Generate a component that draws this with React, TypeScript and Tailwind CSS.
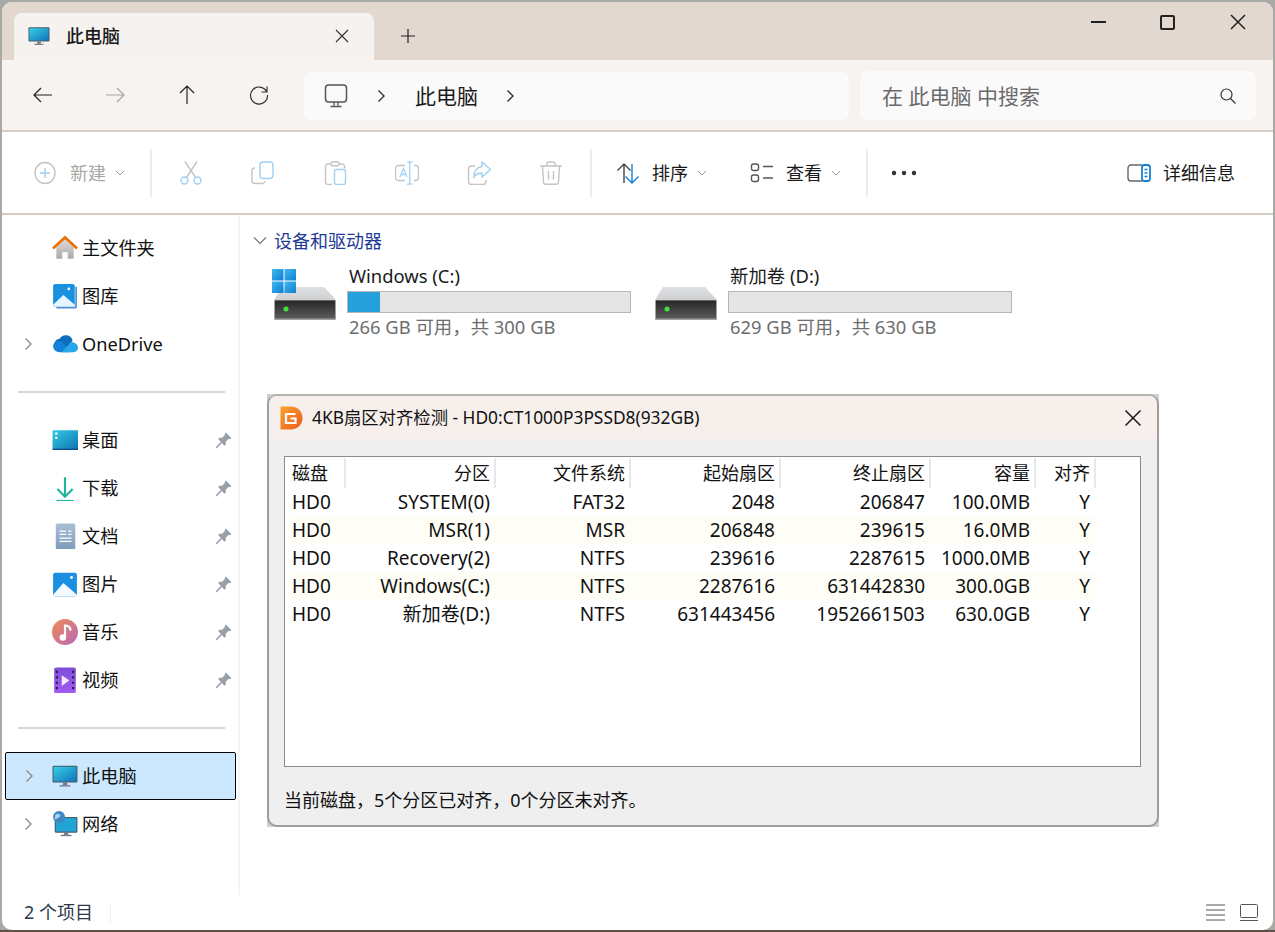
import type { ReactNode } from "react";

const BLUE = "#9fd0f5";
const GRAY = "#c4c4c4";

function Svg({ size = 24, children }: { size?: number; children: ReactNode }) {
  return (
    <svg width={size} height={size} viewBox="0 0 24 24" fill="none" className="shrink-0">
      {children}
    </svg>
  );
}

function Chevron({ color = "#555", size = 14 }: { color?: string; size?: number }) {
  return (
    <svg width={size} height={size} viewBox="0 0 14 14" fill="none" className="shrink-0">
      <path d="M4.5 1.5L10 7l-5.500 5.500" stroke={color} strokeWidth="1.4" />
    </svg>
  );
}

function Caret() {
  return (
    <svg width="10" height="10" viewBox="0 0 10 10" fill="none" className="shrink-0">
      <path d="M1 3l4 4 4-4" stroke="#9a9a9a" strokeWidth="1" />
    </svg>
  );
}

function Monitor({ size = 24 }: { size?: number }) {
  return (
    <svg width={size} height={size} viewBox="0 0 24 24" className="shrink-0">
      <defs>
        <linearGradient id="mon" x1="0" y1="0" x2="1" y2="1">
          <stop offset="0" stopColor="#35d0e6" />
          <stop offset="1" stopColor="#1272b8" />
        </linearGradient>
      </defs>
      <rect x="0.500" y="2.500" width="23" height="15.500" rx="1" fill="#4b5a66" />
      <rect x="1.500" y="3.500" width="21" height="13.500" fill="url(#mon)" />
      <rect x="10" y="18" width="4" height="2.500" fill="#6e7780" />
      <rect x="7" y="20.500" width="10" height="1.200" fill="#6e7780" />
    </svg>
  );
}

function Pin() {
  return (
    <svg width="17" height="17" viewBox="0 0 16 16" className="shrink-0">
      <path d="M10.200 0.500l5.300 5.300-1.700 1-1-0.400-2.700 2.700 0.200 2.600-1.300 1.200-2.600-2.600L1.500 15.500l-1-1 5-5.300-2.600-2.600 1.200-1.300 2.600 0.200 2.700-2.700-0.400-1z" fill="#97a0a8" />
    </svg>
  );
}

function Home() {
  return (
    <Svg size={26}>
      <defs>
        <linearGradient id="hb" x1="0" y1="0" x2="0" y2="1">
          <stop offset="0" stopColor="#dcdcdc" />
          <stop offset="1" stopColor="#a9a9a9" />
        </linearGradient>
      </defs>
      <path d="M4 11l8-7 8 7v11h-5.500v-6h-5v6H4z" fill="url(#hb)" />
      <path d="M0.800 12.500L12 2.300l11.200 10.200" stroke="#e8720c" strokeWidth="2.600" />
    </Svg>
  );
}

function Gallery() {
  return (
    <Svg size={26}>
      <path d="M21.500 3.500H23V22a1.500 1.500 0 0 1-1.500 1.500H4V22h17.500z" fill="#4a8fd0" />
      <rect x="1" y="1" width="20" height="21" rx="2" fill="#1a90e0" />
      <path d="M1 20l9.500-9L21 20v0.500a1.500 1.500 0 0 1-1.500 1.500h-17A1.500 1.500 0 0 1 1 20.500z" fill="#e6f4ff" />
      <circle cx="15.500" cy="5.500" r="1.300" fill="#fff" />
    </Svg>
  );
}

function Cloud() {
  return (
    <Svg size={26}>
      <path d="M6 17a5 5 0 0 1 1-9.800A6.500 6.500 0 0 1 19 9l-6 8z" fill="#0f6cbd" />
      <path d="M7 19.500a5.800 5.800 0 0 1-6-5.500 5 5 0 0 1 5-4.500c2.500 0 4 1.500 5 2.500l6 7.500z" fill="#1582d8" />
      <path d="M9 19.500l8-9c3.500-0.800 7 1.500 7 5 0 2.400-2 4-4 4z" fill="#28a8ea" />
    </Svg>
  );
}

function Desktop() {
  return (
    <Svg size={26}>
      <defs>
        <linearGradient id="dt" x1="0" y1="0" x2="1" y2="1">
          <stop offset="0" stopColor="#32cfe0" />
          <stop offset="1" stopColor="#0d6cb4" />
        </linearGradient>
      </defs>
      <rect x="0.500" y="3" width="25" height="18" rx="1" fill="url(#dt)" />
      <rect x="0.500" y="20" width="25" height="1.200" fill="#0a4c85" />
      <rect x="3" y="5" width="2" height="2" fill="#fff" />
      <rect x="3" y="9" width="2" height="2" fill="#fff" />
    </Svg>
  );
}

function Download() {
  return (
    <Svg size={26}>
      <path d="M12 2v17M5 13l7 7 7-7" stroke="#22b39b" strokeWidth="2" />
      <path d="M4 24h16" stroke="#19b5a0" strokeWidth="2" />
    </Svg>
  );
}

function Doc() {
  return (
    <Svg size={26}>
      <defs>
        <linearGradient id="dc" x1="0" y1="0" x2="0" y2="1">
          <stop offset="0" stopColor="#a9bfd6" />
          <stop offset="1" stopColor="#7f9cba" />
        </linearGradient>
      </defs>
      <rect x="3.500" y="0.500" width="18" height="24" rx="1.500" fill="url(#dc)" />
      <path d="M7 7.500h6M7 10.500h6M15 7.500h3M15 10.500h3M7 14h11M7 17h11" stroke="#fff" strokeWidth="1.300" />
    </Svg>
  );
}

function Picture() {
  return (
    <Svg size={26}>
      <rect x="1" y="1.500" width="22" height="22" rx="2" fill="#1a8ee0" />
      <path d="M1 22l9.500-11L23 22v0a1.500 1.500 0 0 1-1.500 1.500h-19A1.500 1.500 0 0 1 1 22z" fill="#f2f9ff" />
      <circle cx="18" cy="6" r="1.300" fill="#fff" />
    </Svg>
  );
}

function Music() {
  return (
    <Svg size={26}>
      <defs>
        <linearGradient id="mu" x1="0" y1="0" x2="1" y2="1">
          <stop offset="0" stopColor="#f08c55" />
          <stop offset="1" stopColor="#b668b8" />
        </linearGradient>
      </defs>
      <circle cx="12" cy="12" r="12" fill="url(#mu)" />
      <circle cx="10" cy="17" r="3" fill="#fff" />
      <path d="M12 17V6c2 0 5 1 5 4.500" stroke="#fff" strokeWidth="2" fill="none" />
    </Svg>
  );
}

function Video() {
  return (
    <Svg size={26}>
      <defs>
        <linearGradient id="vi" x1="0" y1="0" x2="0" y2="1">
          <stop offset="0" stopColor="#7e4dd8" />
          <stop offset="1" stopColor="#a35cf0" />
        </linearGradient>
      </defs>
      <rect x="2" y="0.500" width="20" height="24" rx="1.500" fill="url(#vi)" />
      <path d="M3.500 3.500h2v2h-2zM3.500 8.500h2v2h-2zM3.500 13.500h2v2h-2zM3.500 18.500h2v2h-2zM18.500 3.500h2v2h-2zM18.500 8.500h2v2h-2zM18.500 13.500h2v2h-2zM18.500 18.500h2v2h-2z" fill="#2f1a5e" />
      <path d="M9 7.500l7 5-7 5z" fill="#f3eaff" />
    </Svg>
  );
}

function Network() {
  return (
    <Svg size={26}>
      <rect x="2.500" y="5.500" width="21" height="14.500" rx="1" fill="#49596a" />
      <rect x="3.500" y="6.500" width="19" height="12.500" fill="#22a5d5" />
      <rect x="11" y="20" width="4" height="2" fill="#6e7780" />
      <rect x="8" y="22" width="10" height="1.200" fill="#6e7780" />
      <circle cx="6.500" cy="5.500" r="5.500" fill="#3f86c4" />
      <path d="M3 3.500c2-1.500 3.500-1 4.500 0s-1 2.500-2 3-2 1.500-3 1z" fill="#a8d2ee" />
    </Svg>
  );
}

function DriveIcon({ logo }: { logo?: boolean }) {
  const id = logo ? "a" : "b";
  return (
    <svg width="66" height="54" viewBox="0 0 66 54" className="shrink-0">
      <defs>
        <linearGradient id={`top${id}`} x1="0" y1="0" x2="0" y2="1">
          <stop offset="0" stopColor="#dfe0e2" />
          <stop offset="1" stopColor="#cfd0d3" />
        </linearGradient>
        <linearGradient id={`box${id}`} x1="0" y1="0" x2="0" y2="1">
          <stop offset="0" stopColor="#262626" />
          <stop offset="1" stopColor="#5c5c5c" />
        </linearGradient>
        <linearGradient id={`win${id}`} x1="0" y1="0" x2="1" y2="1">
          <stop offset="0" stopColor="#3fb8ee" />
          <stop offset="1" stopColor="#0f7fd4" />
        </linearGradient>
      </defs>
      <path d="M11 21h42l12 13H3z" fill={`url(#top${id})`} />
      <rect x="3" y="34" width="62" height="20" rx="1" fill="#a0a0a0" />
      <rect x="4" y="34.500" width="60" height="18" fill={`url(#box${id})`} />
      <circle cx="15" cy="43" r="2.500" fill="#3ee23a" />
      {logo && (
        <g fill={`url(#win${id})`}>
          <rect x="1" y="3" width="11.500" height="11.500" />
          <rect x="13.500" y="3" width="11.500" height="11.500" />
          <rect x="1" y="15.500" width="11.500" height="11.500" />
          <rect x="13.500" y="15.500" width="11.500" height="11.500" />
        </g>
      )}
    </svg>
  );
}

function Drive({ name, free, pct, logo }: { name: string; free: string; pct: number; logo?: boolean }) {
  return (
    <div className="flex">
      <div className="w-[76px] pt-[2px]">
        <DriveIcon logo={logo} />
      </div>
      <div className="w-[284px]">
        <div className="h-[24px] pl-[2px] text-[18.400px] leading-[24px] text-[#1a1a1a]">{name}</div>
        <div className="mt-[3px] h-[22px] border border-[#b6b6b6] bg-[#e5e5e6]">
          <div className="h-full bg-[#26a0da]" style={{ width: `${pct}%` }} />
        </div>
        <div className="mt-[2px] h-[24px] pl-[2px] text-[18.400px] leading-[24px] text-[#6d6d6d]">{free}</div>
      </div>
    </div>
  );
}

function NavRow({ icon, label, expand, pin, selected }: { icon: ReactNode; label: string; expand?: boolean; pin?: boolean; selected?: boolean }) {
  return (
    <div
      className={`ml-[3px] flex h-[48px] w-[231px] items-center rounded-[2px] ${
        selected ? "border border-black bg-[#cce8ff]" : ""
      }`}
    >
      <div className={`flex justify-end ${selected ? "w-[43px] pr-[13px]" : "w-[44px] pr-[14px]"}`}>
        {expand && <Chevron color="#8c8c8c" />}
      </div>
      <div className="flex w-[32px] justify-center">{icon}</div>
      <span className="ml-[1px] pt-[1px] text-[18.200px] text-[#111]">{label}</span>
      {pin && (
        <span className="ml-auto pr-[4px]">
          <Pin />
        </span>
      )}
    </div>
  );
}

function Sep() {
  return (
    <div className="flex h-[48px] items-center pl-[16px]">
      <div className="h-[2px] w-[207px] bg-[#d6d6d6]" />
    </div>
  );
}

const tools = [
  <>
    <circle cx="5.500" cy="19.500" r="3.500" stroke={BLUE} strokeWidth="1.400" />
    <circle cx="18.500" cy="19.500" r="3.500" stroke={BLUE} strokeWidth="1.400" />
    <path d="M7.500 16.500L18 0.500M16.500 16.500L6 0.500" stroke={GRAY} strokeWidth="1.400" />
  </>,
  <>
    <path d="M4 7h-0.500A2.500 2.500 0 0 0 1 9.500v10A3 3 0 0 0 4 22.500h7a3 3 0 0 0 3-2.500" stroke={GRAY} strokeWidth="1.400" />
    <rect x="9" y="1" width="13" height="16.500" rx="3" stroke={BLUE} strokeWidth="1.400" />
  </>,
  <>
    <path d="M8 3H5a2.500 2.500 0 0 0-2.500 2.500v15.500a2.500 2.500 0 0 0 2.500 2.500h4M16 3h3a2.500 2.500 0 0 1 2.500 2.500v2" stroke={GRAY} strokeWidth="1.400" />
    <rect x="8" y="0.800" width="8" height="4" rx="1.500" stroke={GRAY} strokeWidth="1.400" />
    <rect x="11.500" y="8.500" width="11" height="15" rx="2" stroke={BLUE} strokeWidth="1.400" />
  </>,
  <>
    <path d="M10 4.500H3.500A3 3 0 0 0 0.500 7.500v9A3 3 0 0 0 3.500 19.500H10M19 4.500h1.500a3 3 0 0 1 3 3v9a3 3 0 0 1-3 3H19" stroke={GRAY} strokeWidth="1.400" />
    <path d="M12 0.800h5.500M14.750 0.800v22.400M12 23.200h5.500M5 16L8.500 7.500l3.300 8.500M6 13.500h4.800" stroke={BLUE} strokeWidth="1.300" />
  </>,
  <>
    <path d="M8 5H4.500A3 3 0 0 0 1.500 8v12.500a3 3 0 0 0 3 3H16a3 3 0 0 0 3-3v-1.500" stroke={GRAY} strokeWidth="1.400" />
    <path d="M15 1l8.500 7.500L15 16v-4c-4 0-6 1-8 4 0-5.500 2-9.500 8-10.500z" stroke={BLUE} strokeWidth="1.400" />
  </>,
  <>
    <path d="M1 5h22M8 5V3A2 2 0 0 1 10 1h4A2 2 0 0 1 16 3V5M3.500 5l1 16a2.500 2.500 0 0 0 2.500 2.300h10a2.500 2.500 0 0 0 2.500-2.300L20.500 5M9.500 10v8.500M14.500 10v8.500" stroke={GRAY} strokeWidth="1.400" />
  </>,
];

const rows = [
  ["SYSTEM(0)", "FAT32", "2048", "206847", "100.0MB"],
  ["MSR(1)", "MSR", "206848", "239615", "16.0MB"],
  ["Recovery(2)", "NTFS", "239616", "2287615", "1000.0MB"],
  ["Windows(C:)", "NTFS", "2287616", "631442830", "300.0GB"],
  ["新加卷(D:)", "NTFS", "631443456", "1952661503", "630.0GB"],
];

const colWidths = ["w-[150px]", "w-[135px]", "w-[150px]", "w-[150px]", "w-[105px]", "w-[60px]"];

function DiskDialog() {
  return (
    <div className="absolute left-[267px] top-[394px] h-[433px] w-[892px] bg-[#cfcfcc]">
      <div className="flex h-full flex-col overflow-hidden rounded-[10px] border-x-[2px] border-b-[2px] border-t-[2px] border-x-[#9d9d9d] border-b-[#9d9d9d] border-t-[#b5b3ac] bg-[#efefef]">
        <div className="flex h-[43px] shrink-0 items-center bg-[#f6efeb] pl-[11px]">
          <svg width="23" height="24" viewBox="0 0 23 24" className="shrink-0">
            <defs>
              <linearGradient id="dg" x1="0" y1="0" x2="1" y2="1">
                <stop offset="0" stopColor="#f9a12c" />
                <stop offset="1" stopColor="#ee5a1c" />
              </linearGradient>
            </defs>
            <path d="M0.500 0.500H11c6.500 0 11.500 5 11.500 11.500S17.500 23.500 11 23.500H0.500z" fill="url(#dg)" />
            <path d="M15.500 8H6v9h9.500v-4.500H10.500" stroke="#fff" strokeWidth="2.200" fill="none" />
          </svg>
          <span className="ml-[9px] text-[17.350px] text-[#111]">4KB扇区对齐检测 - HD0:CT1000P3PSSD8(932GB)</span>
          <svg width="18" height="18" viewBox="0 0 18 18" className="ml-auto mr-[15px]">
            <path d="M1.500 1.500l15 15M16.500 1.500l-15 15" stroke="#1a1a1a" strokeWidth="1.500" />
          </svg>
        </div>
        <div className="ml-[15px] mt-[17px] h-[311px] w-[857px] shrink-0 border border-[#878b96] bg-white pt-[1px] text-[18px] text-[#111]">
          <div className="ml-[5px] flex h-[30px] items-center">
            <div className="flex h-full w-[56px] items-center border-r-2 border-[#e8e8e8] pl-[2px]">磁盘</div>
            {["分区", "文件系统", "起始扇区", "终止扇区", "容量", "对齐"].map((h, i) => (
              <div key={h} className={`flex h-full items-center justify-end border-r-2 border-[#e8e8e8] pr-[4px] ${colWidths[i]}`}>
                {h}
              </div>
            ))}
          </div>
          {rows.map((r, n) => (
            <div key={r[0]} className={`ml-[5px] flex h-[28px] w-[805px] items-center text-[19px] ${n % 2 === 1 ? "bg-[#fefef7]" : ""}`}>
              <div className="w-[55px] pl-[2px]">HD0</div>
              {[...r, "Y"].map((c, i) => (
                <div key={i} className={`pr-[5px] text-right ${colWidths[i]}`}>
                  {c}
                </div>
              ))}
            </div>
          ))}
        </div>
        <div className="ml-[15px] mt-[21px] h-[24px] text-[18px] leading-[24px] text-[#111]">当前磁盘，5个分区已对齐，0个分区未对齐。</div>
      </div>
    </div>
  );
}

export default function App() {
  return (
    <div className="relative h-[932px] w-[1275px] overflow-hidden bg-[linear-gradient(to_bottom,#a9a9a6_930px,#5f5147_930px)] px-[2px] pb-[2px] pt-[2px] font-['Noto_Sans','Noto_Sans_CJK_SC',sans-serif]">
      <div className="flex h-full flex-col overflow-hidden rounded-[10px] bg-white">
        {/* title bar */}
        <div className="flex h-[58px] shrink-0 bg-[#e3d8d0]">
          <div className="ml-[12px] mt-[11px] flex h-[47px] w-[360px] items-center rounded-t-[8px] bg-[#f6f2ef] pb-[2px] pl-[14px]">
            <Monitor size={22} />
            <span className="ml-[16px] pt-[2px] text-[18px] font-medium text-[#1a1a1a]">此电脑</span>
            <svg width="14" height="14" viewBox="0 0 14 14" className="ml-auto mr-[25px]">
              <path d="M1 1l12 12M13 1L1 13" stroke="#333" strokeWidth="1.100" />
            </svg>
          </div>
          <svg width="14" height="14" viewBox="0 0 14 14" className="ml-[27px] mt-[27px]">
            <path d="M7 0v14M0 7h14" stroke="#222" strokeWidth="1.200" />
          </svg>
          <div className="ml-auto flex h-[40px]">
            <div className="flex w-[70px] items-center justify-center">
              <div className="h-[2px] w-[15px] bg-[#222]" />
            </div>
            <div className="flex w-[70px] items-center justify-center">
              <div className="mr-[2px] h-[15px] w-[15px] rounded-[2px] border-2 border-[#222]" />
            </div>
            <div className="flex w-[70px] items-center justify-center">
              <svg width="16" height="16" viewBox="0 0 16 16">
                <path d="M1 1l14 14M15 1L1 15" stroke="#222" strokeWidth="1.500" />
              </svg>
            </div>
          </div>
        </div>

        {/* nav bar */}
        <div className="flex h-[72px] shrink-0 items-start border-b-2 border-[#d6cbc5] bg-[#f7f3f1] pl-[5px]">
          <div className="flex h-[70px] items-center">
            <div className="flex w-[72px] justify-center">
              <Svg>
                <path d="M21 12H3M10 5l-7 7 7 7" stroke="#222" strokeWidth="1.200" />
              </Svg>
            </div>
            <div className="flex w-[72px] justify-center">
              <Svg>
                <path d="M3 12h18M14 5l7 7-7 7" stroke="#a6a6a6" strokeWidth="1.200" />
              </Svg>
            </div>
            <div className="flex w-[72px] justify-center">
              <Svg>
                <path d="M12 21V3M5 10l7-7 7 7" stroke="#222" strokeWidth="1.200" />
              </Svg>
            </div>
            <div className="flex w-[72px] justify-center">
              <Svg>
                <path d="M19.500 8.500A8.500 8.500 0 1 0 20.500 12M20 3.500v5.500h-5.500" stroke="#333" strokeWidth="1.200" />
              </Svg>
            </div>
          </div>
          <div className="ml-[9px] mt-[12px] flex h-[48px] w-[545px] items-center rounded-[7px] bg-[#fbfafa] pl-[20px]">
            <svg width="24" height="24" viewBox="0 0 24 24" fill="none">
              <rect x="1.500" y="1" width="21" height="17" rx="3" stroke="#555" strokeWidth="1.500" />
              <path d="M10 18v3.500M14 18v3.500M6.500 22.500h11" stroke="#555" strokeWidth="1.300" />
            </svg>
            <span className="ml-[26px]">
              <Chevron color="#333" />
            </span>
            <span className="ml-[27px] pt-[2px] text-[21px] text-[#1a1a1a]">此电脑</span>
            <span className="ml-[25px]">
              <Chevron color="#333" />
            </span>
          </div>
          <div className="ml-[11px] mt-[11px] flex h-[49px] w-[396px] items-center justify-between rounded-[7px] bg-[#fbfafa] pl-[22px] pr-[19px]">
            <span className="pt-[2px] text-[21px] text-[#6b6b6b]">在 此电脑 中搜索</span>
            <svg width="18" height="18" viewBox="0 0 18 18" fill="none">
              <circle cx="7.500" cy="7.500" r="5.500" stroke="#333" strokeWidth="1.200" />
              <path d="M11.500 11.500L16.500 16.500" stroke="#333" strokeWidth="1.200" />
            </svg>
          </div>
        </div>

        {/* command bar */}
        <div className="flex h-[83px] shrink-0 items-center border-b-2 border-[#d6cbc5] bg-white pl-[32px] pr-[38px] pt-[1px]">
          <svg width="22" height="24" viewBox="0 0 22 24" fill="none" className="shrink-0">
            <ellipse cx="11" cy="12" rx="10" ry="10.500" stroke={GRAY} strokeWidth="1.400" />
            <path d="M11 7v10M6 12h10" stroke={BLUE} strokeWidth="1.400" />
          </svg>
          <span className="ml-[14px] w-[36px] text-[18px] text-[#a8a8a8]">新建</span>
          <span className="ml-[9px]">
            <Caret />
          </span>
          <div className="ml-[25px] h-[48px] w-[2px] bg-[#ececec]" />
          <div className="ml-[3px] flex">
            {tools.map((t, i) => (
              <div key={i} className="flex w-[72px] justify-center">
                <Svg>{t}</Svg>
              </div>
            ))}
          </div>
          <div className="ml-[3px] h-[48px] w-[2px] bg-[#ececec]" />
          <span className="ml-[24px]">
            <Svg>
              <path d="M8 22V3M1.500 9.500L8 3l6.500 6.500" stroke="#444" strokeWidth="1.400" />
              <path d="M16 3v19M9.500 15.500L16 22l6.500-6.500" stroke="#1380d8" strokeWidth="1.400" />
            </Svg>
          </span>
          <span className="ml-[12px] w-[36px] text-[18px] text-[#1a1a1a]">排序</span>
          <span className="ml-[9px]">
            <Caret />
          </span>
          <span className="ml-[43px]">
            <Svg>
              <rect x="1.500" y="3" width="7" height="6.500" rx="2" stroke="#555" strokeWidth="1.400" />
              <rect x="1.500" y="14" width="7" height="6.500" rx="2" stroke="#555" strokeWidth="1.400" />
              <path d="M13 5.500h10M13 17h10" stroke="#555" strokeWidth="1.500" />
            </Svg>
          </span>
          <span className="ml-[12px] w-[36px] text-[18px] text-[#1a1a1a]">查看</span>
          <span className="ml-[9px]">
            <Caret />
          </span>
          <div className="ml-[25px] h-[48px] w-[2px] bg-[#ececec]" />
          <svg width="26" height="6" viewBox="0 0 26 6" className="ml-[23px]">
            <circle cx="3" cy="3" r="2.200" fill="#333" />
            <circle cx="13" cy="3" r="2.200" fill="#333" />
            <circle cx="23" cy="3" r="2.200" fill="#333" />
          </svg>
          <div className="ml-auto flex items-center gap-[12px]">
            <Svg>
              <path d="M15 4H4a3 3 0 0 0-3 3v10a3 3 0 0 0 3 3h11" stroke="#666" strokeWidth="1.400" />
              <rect x="15" y="4" width="8" height="16" rx="2.500" stroke="#1380d8" strokeWidth="1.800" />
              <path d="M17.500 8.500h3M17.500 12h3M17.500 15.500h3" stroke="#1380d8" strokeWidth="1.300" />
            </Svg>
            <span className="text-[18px] text-[#1a1a1a]">详细信息</span>
          </div>
        </div>

        {/* content */}
        <div className="flex min-h-0 flex-1">
          <div className="w-[238px] shrink-0 border-r-2 border-[#f5f5f5] pt-[9px]">
            <NavRow icon={<Home />} label="主文件夹" />
            <NavRow icon={<Gallery />} label="图库" />
            <NavRow icon={<Cloud />} label="OneDrive" expand />
            <Sep />
            <NavRow icon={<Desktop />} label="桌面" pin />
            <NavRow icon={<Download />} label="下载" pin />
            <NavRow icon={<Doc />} label="文档" pin />
            <NavRow icon={<Picture />} label="图片" pin />
            <NavRow icon={<Music />} label="音乐" pin />
            <NavRow icon={<Video />} label="视频" pin />
            <Sep />
            <NavRow icon={<Monitor size={26} />} label="此电脑" expand selected />
            <NavRow icon={<Network />} label="网络" expand />
          </div>
          <div className="min-w-0 flex-1 pl-[13px] pt-[13px]">
            <div className="flex h-[26px] items-center">
              <svg width="14" height="10" viewBox="0 0 14 10" fill="none">
                <path d="M1 1.500l6 6 6-6" stroke="#777" strokeWidth="1.200" />
              </svg>
              <span className="ml-[7px] text-[18px] text-[#1e3a96]">设备和驱动器</span>
            </div>
            <div className="ml-[18px] mt-[10px] flex gap-[21px]">
              <Drive name="Windows (C:)" free="266 GB 可用，共 300 GB" pct={11.300} logo />
              <Drive name="新加卷 (D:)" free="629 GB 可用，共 630 GB" pct={0} />
            </div>
          </div>
        </div>

        {/* status bar */}
        <div className="flex h-[35px] shrink-0 items-center pl-[22px] pr-[14px]">
          <span className="text-[18px] text-[#2b3a4a]">2 个项目</span>
          <div className="ml-[17px] h-[18px] w-[1px] bg-[#eeeeee]" />
          <div className="ml-auto flex items-center gap-[15px]">
            <svg width="19" height="17" viewBox="0 0 19 17" fill="none">
              <path d="M0 1h19M0 6h19M0 11h19M0 16h19" stroke="#555" strokeWidth="1" />
            </svg>
            <svg width="19" height="17" viewBox="0 0 19 17" fill="none">
              <rect x="0.500" y="0.500" width="17" height="13" rx="1" stroke="#555" />
              <path d="M0 16.500h18" stroke="#555" />
            </svg>
          </div>
        </div>
      </div>
      <DiskDialog />
    </div>
  );
}
